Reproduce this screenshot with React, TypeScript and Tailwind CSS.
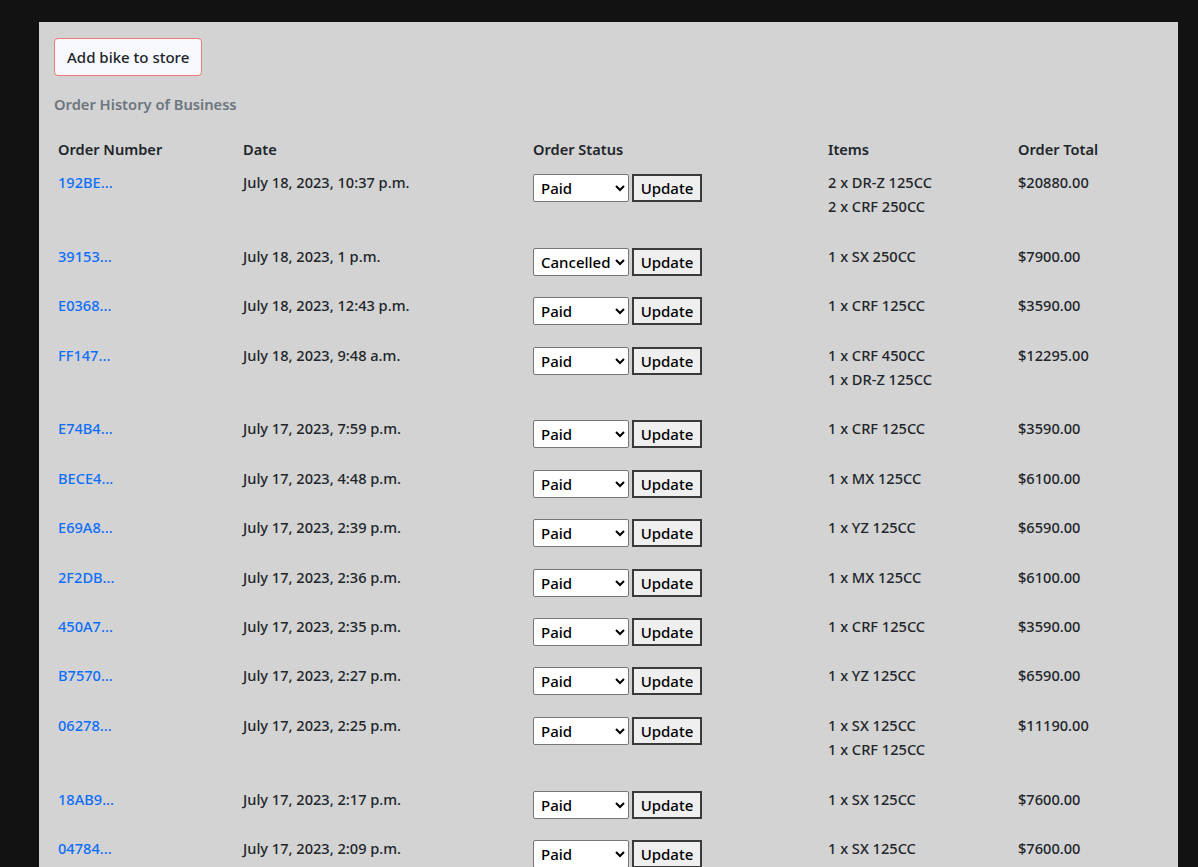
const orders = [
  { id: "192BE...", date: "July 18, 2023, 10:37 p.m.", status: "Paid", items: ["2 x DR-Z 125CC", "2 x CRF 250CC"], total: "$20880.00" },
  { id: "39153...", date: "July 18, 2023, 1 p.m.", status: "Cancelled", items: ["1 x SX 250CC"], total: "$7900.00" },
  { id: "E0368...", date: "July 18, 2023, 12:43 p.m.", status: "Paid", items: ["1 x CRF 125CC"], total: "$3590.00" },
  { id: "FF147...", date: "July 18, 2023, 9:48 a.m.", status: "Paid", items: ["1 x CRF 450CC", "1 x DR-Z 125CC"], total: "$12295.00" },
  { id: "E74B4...", date: "July 17, 2023, 7:59 p.m.", status: "Paid", items: ["1 x CRF 125CC"], total: "$3590.00" },
  { id: "BECE4...", date: "July 17, 2023, 4:48 p.m.", status: "Paid", items: ["1 x MX 125CC"], total: "$6100.00" },
  { id: "E69A8...", date: "July 17, 2023, 2:39 p.m.", status: "Paid", items: ["1 x YZ 125CC"], total: "$6590.00" },
  { id: "2F2DB...", date: "July 17, 2023, 2:36 p.m.", status: "Paid", items: ["1 x MX 125CC"], total: "$6100.00" },
  { id: "450A7...", date: "July 17, 2023, 2:35 p.m.", status: "Paid", items: ["1 x CRF 125CC"], total: "$3590.00" },
  { id: "B7570...", date: "July 17, 2023, 2:27 p.m.", status: "Paid", items: ["1 x YZ 125CC"], total: "$6590.00" },
  { id: "06278...", date: "July 17, 2023, 2:25 p.m.", status: "Paid", items: ["1 x SX 125CC", "1 x CRF 125CC"], total: "$11190.00" },
  { id: "18AB9...", date: "July 17, 2023, 2:17 p.m.", status: "Paid", items: ["1 x SX 125CC"], total: "$7600.00" },
  { id: "04784...", date: "July 17, 2023, 2:09 p.m.", status: "Paid", items: ["1 x SX 125CC"], total: "$7600.00" },
];

const statuses = ["Paid", "Pending", "Shipped", "Cancelled"];

export default function App() {
  return (
    <div
      className="h-[867px] overflow-hidden bg-[#121212] pl-[39px] pr-[20px] pt-[22px] text-[#212529]"
      style={{ fontFamily: '"Noto Sans", sans-serif' }}
    >
      <div className="h-full bg-[#d3d3d3] px-[15px] pt-[16px]">
        <button
          type="button"
          className="h-[38px] rounded-[4px] border border-[#f07878] bg-[#f7f9fe] px-[12px] text-[15px] font-medium text-[#212529]"
        >
          Add bike to store
        </button>

        {/* Order history */}
        <h2 className="mt-[16px] text-[14.7px] font-semibold leading-[24px] text-[#6c757d]">
          Order History of Business
        </h2>

        <table className="mt-[21px] w-full table-fixed border-collapse text-left text-[14.6px]">
          <colgroup>
            <col className="w-[185px]" />
            <col className="w-[290px]" />
            <col className="w-[295px]" />
            <col className="w-[190px]" />
            <col />
          </colgroup>
          <thead>
            <tr>
              <th className="px-[4px] pb-[9px] align-top font-semibold leading-[24px]">Order Number</th>
              <th className="px-[4px] pb-[9px] align-top font-semibold leading-[24px]">Date</th>
              <th className="px-[4px] pb-[9px] align-top font-semibold leading-[24px]">Order Status</th>
              <th className="px-[4px] pb-[9px] align-top font-semibold leading-[24px]">Items</th>
              <th className="px-[4px] pb-[9px] align-top font-semibold leading-[24px]">Order Total</th>
            </tr>
          </thead>
          <tbody>
            {orders.map((order) => (
              <tr key={order.id} className="font-medium leading-[24.4px]">
                <td className="px-[4px] pb-[25px] align-top">
                  <a href="#" className="text-[#0d6efd]">
                    {order.id}
                  </a>
                </td>
                <td className="px-[4px] pb-[25px] align-top">{order.date}</td>
                <td className="px-[4px] pt-[4px] align-top">
                  <div className="flex items-center gap-[3px]">
                    <select
                      defaultValue={order.status}
                      className="h-[28px] w-[96px] rounded-[2px] border border-[#767676] bg-white pl-[3px] text-[15px] text-black"
                    >
                      {statuses.map((s) => (
                        <option key={s}>{s}</option>
                      ))}
                    </select>
                    <button
                      type="button"
                      className="h-[28px] w-[70px] border-2 border-[#3a3a3a] bg-[#efefef] text-[15px] text-black"
                    >
                      Update
                    </button>
                  </div>
                </td>
                <td className="px-[4px] pb-[25px] align-top">
                  {order.items.map((item) => (
                    <div key={item}>{item}</div>
                  ))}
                </td>
                <td className="px-[4px] pb-[25px] align-top">{order.total}</td>
              </tr>
            ))}
          </tbody>
        </table>
      </div>
    </div>
  );
}
